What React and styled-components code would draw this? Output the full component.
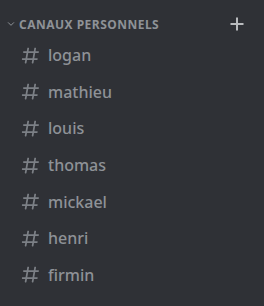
import styled, { createGlobalStyle } from 'styled-components';

const GlobalStyle = createGlobalStyle`
  html, body {
    margin: 0;
    padding: 0;
    background: #2f3136;
  }
  body {
    font-family: "Noto Sans", "Open Sans", sans-serif;
  }
`;

const Panel = styled.div`
  width: 264px;
  height: 306px;
  background: #2f3136;
  padding-top: 16px;
  box-sizing: border-box;
`;

const Header = styled.div`
  display: flex;
  align-items: center;
  height: 16px;
  padding: 0 20px 0 7px;
`;

const Title = styled.h2`
  flex: 1;
  margin: 0 0 0 4px;
  font-size: 12px;
  font-weight: 700;
  letter-spacing: 0.04em;
  text-transform: uppercase;
  color: #8e9297;
`;

const List = styled.ul`
  list-style: none;
  margin: 0;
  padding: 0;
  padding-top: 5px;
`;

const Row = styled.li`
  display: flex;
  align-items: center;
  height: 36.6px;
  padding-left: 20px;
  color: #8e9297;
`;

const Name = styled.span`
  margin-left: 7px;
  font-size: 16px;
  font-weight: 500;
`;

const Chevron = () => (
  <svg width="8" height="8" viewBox="0 0 24 24" fill="none">
    <path d="M4 8l8 8 8-8" stroke="#8e9297" strokeWidth="3" strokeLinecap="round" strokeLinejoin="round" />
  </svg>
);

const Plus = () => (
  <svg width="14" height="14" viewBox="0 0 14 14">
    <path d="M7 0.5v13M0.5 7h13" stroke="#b9bbbe" strokeWidth="2" />
  </svg>
);

const Hash = () => (
  <svg width="21" height="21" viewBox="0 0 24 24">
    <path
      fill="#7c8086"
      fillRule="evenodd"
      d="M5.88657 21C5.57547 21 5.3399 20.7189 5.39427 20.4126L6.00001 17H2.59511C2.28449 17 2.04905 16.7198 2.10259 16.4138L2.27759 15.4138C2.31946 15.1746 2.52722 15 2.77011 15H6.35001L7.41001 9H4.00511C3.69449 9 3.45905 8.71977 3.51259 8.41381L3.68759 7.41381C3.72946 7.17456 3.93722 7 4.18011 7H7.76001L8.39677 3.41262C8.43914 3.17391 8.64664 3 8.88907 3H9.87344C10.1845 3 10.4201 3.28107 10.3657 3.58738L9.76001 7H15.76L16.3968 3.41262C16.4391 3.17391 16.6466 3 16.8891 3H17.8734C18.1845 3 18.4201 3.28107 18.3657 3.58738L17.76 7H21.1649C21.4755 7 21.711 7.28023 21.6574 7.58619L21.4824 8.58619C21.4406 8.82544 21.2328 9 20.9899 9H17.41L16.35 15H19.7549C20.0655 15 20.301 15.2802 20.2474 15.5862L20.0724 16.5862C20.0306 16.8254 19.8228 17 19.5799 17H16L15.3632 20.5874C15.3209 20.8261 15.1134 21 14.8709 21H13.8866C13.5755 21 13.3399 20.7189 13.3943 20.4126L14 17H8.00001L7.36325 20.5874C7.32088 20.8261 7.11337 21 6.87094 21H5.88657ZM9.41045 9L8.35045 15H14.3504L15.4104 9H9.41045Z"
    />
  </svg>
);

const channels = ['logan', 'mathieu', 'louis', 'thomas', 'mickael', 'henri', 'firmin'];

export default function App() {
  return (
    <>
      <GlobalStyle />
      <Panel>
        <Header>
          <Chevron />
          <Title>Canaux personnels</Title>
          <Plus />
        </Header>
        <List>
          {channels.map(name => (
            <Row key={name}>
              <Hash />
              <Name>{name}</Name>
            </Row>
          ))}
        </List>
      </Panel>
    </>
  );
}
